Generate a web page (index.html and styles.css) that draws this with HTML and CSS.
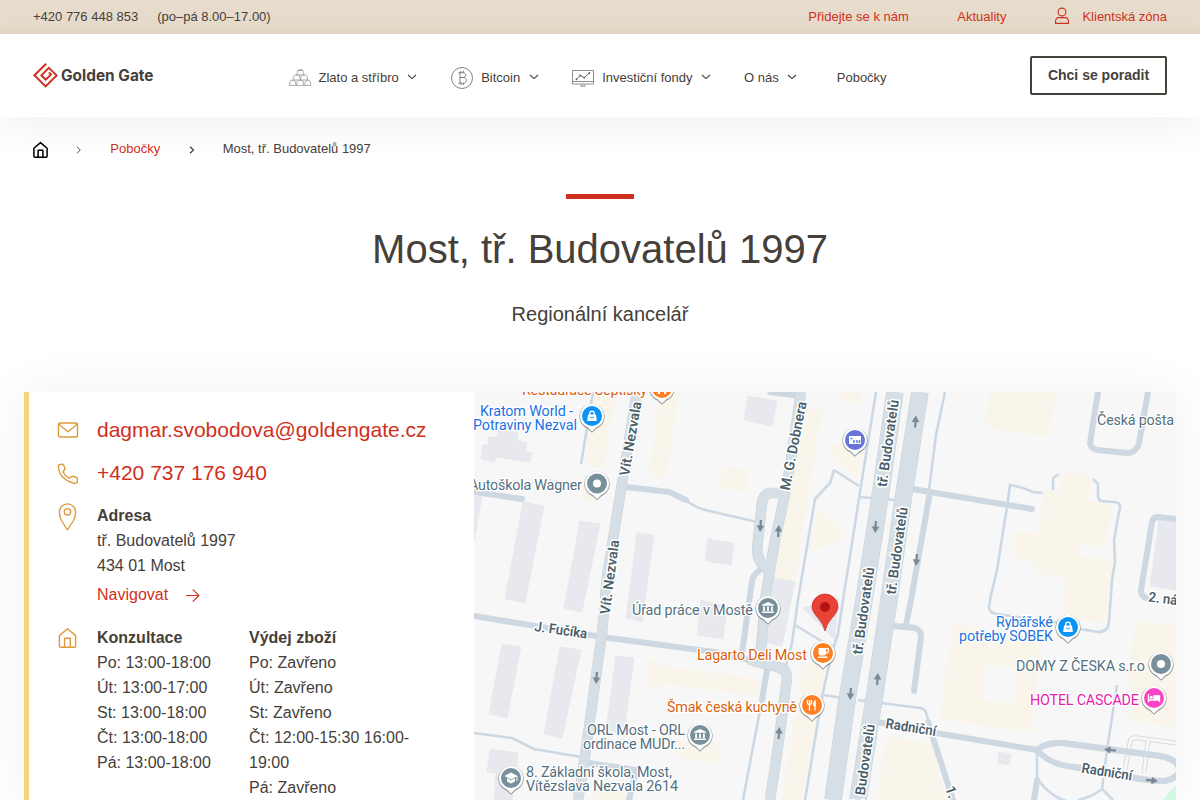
FILE: index.html
```html
<!DOCTYPE html>
<html lang="cs">
<head>
<meta charset="utf-8">
<title>Most, tř. Budovatelů 1997 | Golden Gate</title>
<link rel="stylesheet" href="styles.css">
</head>
<body>
<div class="topbar">
  <div class="topbar-contact"><span class="t-phone">+420 776 448 853</span><span>(po–pá 8.00–17.00)</span></div>
  <nav class="topbar-links">
    <a>Přidejte se k nám</a><a>Aktuality</a>
    <a class="client"><svg width="16" height="18" viewBox="0 0 16 18"><g fill="none" stroke="#cf3020" stroke-width="1.1"><circle cx="8" cy="5" r="3.9"/><path d="M3.8 10.6H12.2C14 11 14.6 13 14.5 16.4H1.5C1.4 13 2 11 3.8 10.6Z" stroke-linejoin="round"/></g></svg><span>Klientská zóna</span></a>
  </nav>
</div>
<header class="header">
  <svg class="logo" width="122" height="28" viewBox="0 0 122 28"><path d="M13.2 1.7L1.4 13.2L12.6 24.4L23.6 13.4L15.800 5.800L8.4 13.4L12.7 17.700L18 12.500L15.900 10.400" fill="none" stroke="#cf3020" stroke-width="2"/><text x="28" y="19" textLength="92.5" lengthAdjust="spacingAndGlyphs" class="logo-text">Golden Gate</text></svg>
  <nav class="menu">
    <a class="m-gold"><svg width="24" height="22" viewBox="0 0 24 22"><g fill="#fff" stroke="#9c9894" stroke-width=".8" stroke-linejoin="round"><path d="M8.8 8L9.7 3.5L11 2.7H14L15 3.5L16 8ZM9.7 3.5H15M5 13L6 8.6L7 8H10.4L11.4 8.6L12.4 13ZM12.4 13L13.4 8.6L14.4 8H17.8L18.8 8.6L19.8 13ZM1.2 18.4L2.2 14L3.2 13.4H6L7 14L8.2 18.4ZM8.4 18.4L9.4 14L10.4 13.4H14L15 14L16 18.4ZM16.4 18.4L17.6 14L18.5 13.4H21L22 14L23 18.4Z"/></g></svg><span>Zlato a stříbro</span><svg class="chev" width="10" height="6" viewBox="0 0 10 6"><path d="M1 1L5 4.6L9 1"/></svg></a>
    <a class="m-bit"><svg width="24" height="24" viewBox="0 0 24 24"><g fill="none" stroke="#77736e" stroke-width=".9"><circle cx="12" cy="12" r="10.5"/><path d="M8.3 6.7H13C16.4 6.7 16.4 11.5 13 11.5H10H13.4C17.3 11.5 17.3 17.2 13.4 17.2H8.3M10 6.7V17.2M11 4.8V6.7M13.4 4.8V6.7M11 17.2V19.2M13.4 17.2V19.2"/></g></svg><span>Bitcoin</span><svg class="chev" width="10" height="6" viewBox="0 0 10 6"><path d="M1 1L5 4.6L9 1"/></svg></a>
    <a class="m-fund"><svg width="24" height="20" viewBox="0 0 24 20"><g fill="none" stroke="#85817c" stroke-width=".9"><path d="M1.5 2.5H22.5V16H1.5ZM1.5 13.5H22.5"/><path d="M5.5 11.3L9.3 7.5L13.3 9.7L18.3 5" stroke="#55514c"/><path d="M10.8 16L10.5 18.2H13.5L13.2 16M9 18.2H15" stroke-width=".6"/></g><g fill="#55514c"><circle cx="5.5" cy="11.3" r=".9"/><circle cx="9.3" cy="7.5" r=".9"/><circle cx="13.3" cy="9.7" r=".9"/><circle cx="18.3" cy="5" r=".9"/></g></svg><span>Investiční fondy</span><svg class="chev" width="10" height="6" viewBox="0 0 10 6"><path d="M1 1L5 4.6L9 1"/></svg></a>
    <a class="m-about"><span>O nás</span><svg class="chev" width="10" height="6" viewBox="0 0 10 6"><path d="M1 1L5 4.6L9 1"/></svg></a>
    <a class="m-branch"><span>Pobočky</span></a>
  </nav>
  <a class="button">Chci se poradit</a>
</header>
<nav class="crumbs">
  <svg width="17" height="18" viewBox="0 0 17 18"><path d="M1.9 7.2L8.5 1.6L15.1 7.2V15.2Q15.1 16.2 14.1 16.2H2.9Q1.9 16.2 1.9 15.2ZM6.1 16V9.3H10.9V16" fill="none" stroke="#000" stroke-width="1.5" stroke-linejoin="round"/></svg>
  <svg class="sep1" width="6" height="8" viewBox="0 0 6 8"><path d="M1 .8L4.3 4L1 7.2" fill="none" stroke="#555" stroke-width="1"/></svg>
  <a>Pobočky</a>
  <svg class="sep2" width="6" height="8" viewBox="0 0 6 8"><path d="M1 .8L4.5 4L1 7.2" fill="none" stroke="#444" stroke-width="1.3"/></svg>
  <span>Most, tř. Budovatelů 1997</span>
</nav>
<main>
  <div class="intro"><div class="bar"></div><h1>Most, tř. Budovatelů 1997</h1><p>Regionální kancelář</p></div>
  <section class="card">
    <div class="info">
      <div class="row mail"><svg width="22" height="22" viewBox="0 0 22 22"><g class="gold"><rect x="1.5" y="4" width="19" height="14" rx="1.8"/><path d="M1.8 5.3L11 12.8L20.2 5.3"/></g></svg><a class="big">dagmar.svobodova@goldengate.cz</a></div>
      <div class="row tel"><svg width="22" height="22" viewBox="0 0 22 22"><path class="gold" d="M1.5 2.2Q4 .7 6.2 1.5Q7.6 3.8 8 6L5.9 8.8Q8 13.2 12.5 15.3L15 13.2Q18.3 13.3 20.3 15V19.4Q19.4 20.7 15.8 20Q9.7 18.2 5.3 13.7Q1.1 8.4 1.5 2.2Z"/></svg><a class="big">+420 737 176 940</a></div>
      <div class="row addr"><svg width="22" height="30" viewBox="0 0 22 30"><g class="gold"><path d="M10.5 28L4.5 18.5Q2.4 14.5 2.4 10A8 8 0 0 1 18.6 10Q18.6 14.5 16.5 18.5Z"/><circle cx="10.5" cy="9.8" r="3.2"/></g></svg><div class="lines"><strong>Adresa</strong><span>tř. Budovatelů 1997</span><span>434 01 Most</span><a>Navigovat<svg width="14" height="14" viewBox="0 0 14 14"><path d="M0 7.5H13M6.7 1.300L13 7.5L6.7 13.700" fill="none" stroke="#cf3020" stroke-width="1.1"/></svg></a></div></div>
      <div class="row hours"><svg width="22" height="22" viewBox="0 0 22 22"><path class="gold" d="M2.4 8.6L10.5 1.8L18.6 8.6V18.9Q18.6 20.2 17.3 20.2H3.7Q2.4 20.2 2.4 18.9ZM7.6 20V11.2H13.3V20"/></svg>
        <div class="lines"><strong>Konzultace</strong><span>Po: 13:00-18:00</span><span>Út: 13:00-17:00</span><span>St: 13:00-18:00</span><span>Čt: 13:00-18:00</span><span>Pá: 13:00-18:00</span></div>
        <div class="lines second"><strong>Výdej zboží</strong><span>Po: Zavřeno</span><span>Út: Zavřeno</span><span>St: Zavřeno</span><span>Čt: 12:00-15:30 16:00-19:00</span><span>Pá: Zavřeno</span></div></div>
    </div>
    <svg class="map" width="702" height="408" viewBox="474 392 702 408">
      <defs>
        <g id="pin"><path d="M0 16L-4.8 11.8A12.7 12.7 0 1 1 4.8 11.8Z" fill="#566269" opacity=".3" transform="translate(0 .6)"/><path d="M0 16L-4.500 11.700A12.500 12.500 0 1 1 4.500 11.700Z" fill="#59666d" opacity=".45" transform="translate(0 .8)"/><path d="M0 15.5L-4.3 11.3A12 12 0 1 1 4.3 11.3Z" fill="#fff"/></g>
        <g id="arrow"><path d="M0 6V-1" stroke="#788994" stroke-width="2.2"/><path d="M-3.8 .4L0 -6L3.8 .4Z" fill="#788994"/></g>
        <g id="bank" fill="#fff"><path d="M-6 -2.3V-3.3L0 -6L6 -3.3V-2.3ZM-4.8 -1.5H-3V3H-4.8ZM-.9 -1.5H.9V3H-.9ZM3 -1.5H4.8V3H3ZM-6 3.5H6V5H-6Z"/></g>
        <g id="bag"><path d="M-4 -1.5H4L4.8 5H-4.8Z" fill="#fff"/><path d="M-2.2 -1V-2.7A2.2 2.2 0 0 1 2.2 -2.7V-1" fill="none" stroke="#fff" stroke-width="1.3"/><path d="M-1.8 .8Q0 3.5 1.8 .8" fill="none" stroke="#0a93f5"/></g>
      </defs>
      <rect x="474" y="392" width="702" height="408" fill="#f7f7f7"/>
      <g class="shop">
        <path d="M594 392L616 392L603 468L584 466ZM660 392H679L666 479L649 475ZM584 479L604 480L598 502L580 499ZM723 466L749 470L746 492L719 488ZM806 407L822 410L795 582L774 578ZM840 392H861L859 403L839 400ZM825 448L847 440L863 452L857 477ZM817 508L848 536L809 552ZM803 663L826 665L802 800H782ZM886 737L932 743L945 800H877ZM649 659L662 661V666L759 679L757 696L662 683V688L646 686ZM677 740L721 743L717 764L674 756ZM596 788L626 792L625 800H593ZM990 392H1056L1049 437L985 427ZM1135 621L1176 625L1174 727L1130 720L1132 683L1128 682Z"/>
        <path d="M1059 475L1075 472L1094 478L1087 500L1112 503L1105 547L1080 543L1078 555L1114 561L1106 622L1063 617L1067 578L1035 573L1036 562L1013 558L1015 532L1039 533L1044 490L1061 493Z"/>
        <path fill-rule="evenodd" d="M953 624L1042 638L1031 732L939 719ZM985 664L1018 668L1013 704L981 699Z"/>
      </g>
      <path class="house" d="M481 459L483 445L488 445L489 437L496 437L499 430L517 432L518 441L527 443L526 451L532 453L530 462L496 457L494 462ZM474 496L482 497L474 541ZM523 502L544 506L525 603L505 599ZM580 521L600 524L582 612L564 608ZM637 533L654 535L642 622L626 618ZM708 539L734 543L731 565L705 561ZM748 396L777 401L772 426L744 420ZM774 578L795 582L782 646L763 642ZM803 608L838 598L835 640ZM701 600L727 607L723 639L697 635ZM502 644L521 647L507 718L489 714ZM560 647L581 650L562 738L544 734ZM616 656L634 658L624 733L606 730ZM490 749L518 753L516 775L512 800H494L496 773L487 772ZM1159 520L1176 522V590L1150 586ZM999 752L1011 754L1009 765L998 763ZM549 479L560 481L558 488H548Z"/>
      <path d="M1163 800L1176 785V800Z" fill="#d3f8e2"/>
      <g class="path">
        <path d="M593 392L581 464M686 500Q696 509 714 512L757 522M876 392L864 467L843 600L838 634L832 652L822 697L805 800M859 486L834 470L830 483L815 499L798 600L792 643L786 665M795 625L823 642M860 497L895 500M945 392L936 435L929 490M823 695L843 698M858 700L920 708Q926 709 927 716L930 727M767 670L761 705L743 800M474 733L512 738L534 749L581 757"/>
        <path d="M1043 493L1033 492Q1022 487 1010 485L1007 507L997 570L991 595L989 607Q989 613 997 614L1060 623M1080 629L1098 632Q1108 632 1109 622L1112 580L1115 562L1114 540L1120 507Q1120 502 1114 502L1102 501Q1098 500 1098 496V484L1093 479M1053 490V480Q1054 475 1059 475M1117 685L1107 750L1102 789M1037 752V780M1038 780Q1053 799 1070 802M1078 800Q1092 797 1102 789L1113 800"/>
      </g>
      <g class="lane">
        <path d="M474 492L522 499M626 487L669 492L686 500M474 616L602 637L714 652L753 661M770 392L800 396M760 570Q753 575 752 581L742 653M767 670L762 700M930 492L911 600L906 625M913 489L930 492L1032 509M895 626L915 628Q921 630 921 637L914 691M877 722L930 732L1037 750M928 722L953 800M589 763L636 770L629 800M1098 392L1090 443Q1090 448 1097 450L1127 453Q1136 453 1139 443L1148 392M1176 519L1158 517Q1153 517 1152 522L1141 590Q1141 596 1146 598"/>
        <path d="M1037 750Q1045 742 1063 743L1160 756Q1174 759 1178 765Q1183 777 1165 781Q1150 781 1130 777L1074 767Q1050 765 1037 750M1037 780L1034 800"/>
      </g>
      <path d="M1125 770L1130 742Q1131 737 1138 738L1176 743M1148 740L1144 773" fill="none" stroke="#d5dde3" stroke-width="5"/><path d="M1125 770L1130 742Q1131 737 1138 738L1176 743M1148 740L1144 773" fill="none" stroke="#f7f7f7" stroke-width="3"/>
      <path class="lane" d="M1037 750Q1045 742 1063 743L1160 756Q1174 759 1178 765Q1183 777 1165 781Q1150 781 1130 777L1074 767"/>
      <g class="road edge">
        <path class="w10" d="M637 392L623 477L607 577L602 633L584 763L578 800M801 392L787 485L775 540L769 575L765 600L761 650M784 493H772Q764 493 762 502L757 550Q758 563 768 570M753 661L777 667Q787 669 787 678L778 747L770 800"/>
        <path class="w18" d="M895 392L880 497L864 600L847 700L833 800M920 392L903 500L889 600L875 693L858 800"/>
      </g>
      <g class="road">
        <path class="w10" d="M637 392L623 477L607 577L602 633L584 763L578 800M801 392L787 485L775 540L769 575L765 600L761 659M784 493H772Q764 493 762 502L757 550Q758 563 768 570M748 660L777 667Q787 669 787 678L778 747L770 800"/>
        <path class="w18" d="M895 392L880 497L864 600L847 700L833 800M920 392L903 500L889 600L875 693L858 800"/>
      </g>
      <use href="#arrow" transform="translate(915.500 421.500) rotate(4)"/><use href="#arrow" transform="translate(875.500 527) rotate(184)"/><use href="#arrow" transform="translate(916.500 560) rotate(184)"/><use href="#arrow" transform="translate(760.500 526) rotate(184)"/><use href="#arrow" transform="translate(778.500 531) rotate(4)"/><use href="#arrow" transform="translate(596.500 678) rotate(184)"/><use href="#arrow" transform="translate(850.500 694) rotate(184)"/><use href="#arrow" transform="translate(877.500 679) rotate(4)"/><use href="#arrow" transform="translate(779 733) rotate(4)"/><use href="#arrow" transform="translate(1110 750) rotate(-84)"/><use href="#arrow" transform="translate(1152 780.500) rotate(96)"/>
      <g class="street">
        <text transform="translate(629 476.500) rotate(-80.500)" textLength="75" lengthAdjust="spacingAndGlyphs">Vít. Nezvala</text>
        <text transform="translate(609.500 615) rotate(-82.500)" textLength="75" lengthAdjust="spacingAndGlyphs">Vít. Nezvala</text>
        <text transform="translate(789.500 491) rotate(-79)" textLength="90" lengthAdjust="spacingAndGlyphs">M. G. Dobnera</text>
        <text transform="translate(886.500 487.500) rotate(-82)" textLength="88" lengthAdjust="spacingAndGlyphs">tř. Budovatelů</text>
        <text transform="translate(895.500 595) rotate(-82)" textLength="88" lengthAdjust="spacingAndGlyphs">tř. Budovatelů</text>
        <text transform="translate(862 655) rotate(-82)" textLength="88" lengthAdjust="spacingAndGlyphs">tř. Budovatelů</text>
        <text transform="translate(862.500 812) rotate(-82)" textLength="88" lengthAdjust="spacingAndGlyphs">tř. Budovatelů</text>
        <text transform="translate(534 631) rotate(8)" textLength="53" lengthAdjust="spacingAndGlyphs">J. Fučíka</text>
        <text transform="translate(885 728) rotate(9)" textLength="51" lengthAdjust="spacingAndGlyphs">Radniční</text>
        <text transform="translate(1081 772.500) rotate(9)" textLength="51" lengthAdjust="spacingAndGlyphs">Radniční</text>
        <text transform="translate(1148 601.500) rotate(7)" textLength="29" lengthAdjust="spacingAndGlyphs">2. ná</text>
        <text transform="translate(945 788) rotate(70)">1.</text>
      </g>
      <g class="poi food"><text x="522" y="395" textLength="125">Restaurace Septisky</text><text x="697" y="660" textLength="110">Lagarto Deli Most</text><text x="667" y="712" textLength="130">Šmak česká kuchyně</text></g>
      <g class="poi blue"><text x="480" y="416" textLength="93">Kratom World -</text><text x="473" y="430" textLength="104">Potraviny Nezval</text><text x="996" y="627" textLength="57">Rybářské</text><text x="959" y="641" textLength="94">potřeby SOBEK</text></g>
      <g class="poi slate"><text x="469" y="490" textLength="113">Autoškola Wagner</text><text x="1097" y="425" textLength="77">Česká pošta</text><text x="632" y="615" textLength="121">Úřad práce v Mostě</text><text x="587" y="735" textLength="98">ORL Most - ORL</text><text x="583" y="749" textLength="102">ordinace MUDr...</text><text x="526" y="777" textLength="146">8. Základní škola, Most,</text><text x="526" y="791" textLength="152">Vítězslava Nezvala 2614</text><text x="1016" y="671" textLength="129">DOMY Z ČESKA s.r.o</text></g>
      <g class="poi pink"><text x="1030" y="705" textLength="109">HOTEL CASCADE</text></g>
      <g transform="translate(662 388)"><use href="#pin"/><circle r="10" fill="#ff7f22"/><path d="M-3 -4V6M3 -4V6" stroke="#fff" stroke-width="2"/></g>
      <g transform="translate(592 416)"><use href="#pin"/><circle r="10" fill="#0a93f5"/><use href="#bag"/></g>
      <g transform="translate(597 483.500)"><use href="#pin"/><circle r="10" fill="#78909c"/><circle r="4" fill="#fff"/></g>
      <g transform="translate(855 440)"><use href="#pin"/><circle r="10" fill="#6675d6"/><path d="M-6 -4H6V4H-6Z" fill="#fff"/><path d="M-4.500 -1.500H-2.500M-1 0V3M2 0V3M4.500 0V3" stroke="#4d86e5" stroke-width="1.5"/></g>
      <g transform="translate(768 608)"><use href="#pin"/><circle r="10" fill="#78909c"/><use href="#bank"/></g>
      <g transform="translate(700 735)"><use href="#pin"/><circle r="10" fill="#78909c"/><use href="#bank"/></g>
      <g transform="translate(511 778)"><use href="#pin"/><circle r="10" fill="#78909c"/><path d="M0 -5.500L6.500 -2L0 1.500L-6.500 -2ZM-4 0V3.500L0 5.500L4 3.500V0L0 2.500ZM5.500 -2H6.500V3H5.500Z" fill="#fff"/></g>
      <g transform="translate(823 653)"><use href="#pin"/><circle r="10" fill="#ff7f22"/><path d="M-4.500 -5H6V-1.500Q6 .5 3 .5Q3 2.500 1 2.500H-2.500Q-4.500 2.500 -4.500 .5ZM3 -3.700V-.7Q4.800 -.7 4.800 -2V-3.700ZM-5 3.600H4.500V5H-5Z" fill="#fff"/></g>
      <g transform="translate(812 705)"><use href="#pin"/><circle r="10" fill="#ff7f22"/><path d="M-2.500 -5V5.500M-4.500 -5V-1.500Q-2.500 1 -.5 -1.500V-5M3 -4.500V5.500" fill="none" stroke="#fff" stroke-width="1.3"/><path d="M3.600 -5Q1 -4 1 1H3.600Z" fill="#fff"/></g>
      <g transform="translate(1068 627)"><use href="#pin"/><circle r="10" fill="#0a93f5"/><use href="#bag"/></g>
      <g transform="translate(1161 664)"><use href="#pin"/><circle r="10" fill="#78909c"/><circle r="4" fill="#fff"/></g>
      <g transform="translate(1154 698)"><use href="#pin"/><circle r="10" fill="#fa44c5"/><path d="M-5.500 -4V4M-5.500 2H5.500V4M5.500 2V-2H0V1.500" fill="none" stroke="#fff" stroke-width="1.3"/><path d="M0 -2.500H5.500V2H0Z" fill="#fff"/><circle cx="-2.700" cy="-.8" r="1.500" fill="#fff"/></g>
      <path d="M825 631Q823.500 624 818 618Q812 611 812 607A13 13 0 0 1 838 607Q838 611 832 618Q826.500 624 825 631Z" fill="#ea4335" stroke="#c5221f" stroke-width=".7"/><circle cx="825" cy="607" r="5" fill="#b31412"/>
    </svg>
  </section>
</main>
</body>
</html>
```

FILE: styles.css
```css
* { box-sizing: border-box; }
html, body { height: 800px; overflow: hidden; }
body { margin: 0; background: #fff; color: #45403a; font-family: "Liberation Sans", Arial, sans-serif; font-size: 13px; }
svg { flex: none; display: block; }
a { color: #cf3020; }
.topbar { height: 34px; padding: 0 33px 2px; display: flex; align-items: center; justify-content: space-between; background: linear-gradient(#e7dccb 70%, #e3d8c6); }
.topbar-contact { display: flex; gap: 19px; }
.topbar-links { display: flex; align-items: center; gap: 48.5px; }
.client { display: flex; align-items: center; gap: 12px; }
.topbar-links a:nth-child(2) { margin-right: -.5px; }
.header { height: 83px; padding: 0 33px; display: flex; background: #fff; box-shadow: 0 10px 40px rgba(0, 0, 0, .055); }
.logo { margin-top: 28px; }
.logo-text { font: 700 15.5px Inter, sans-serif; fill: #45403a; }
.menu { display: flex; height: 24px; margin: 31px 0 0 133px; align-items: center; }
.menu a { display: flex; align-items: center; color: #45403a; white-space: nowrap; }
.menu a > svg:first-child:not(.chev) { margin-right: 7px; }
.menu .m-gold > svg:first-child { margin-top: 2px; margin-left: -.5px; margin-right: 7.5px; }
.menu .m-bit > svg:first-child, .menu .m-fund > svg:first-child { margin-top: 1px; }
.menu .chev { margin-left: 8.5px; fill: none; stroke: #45403a; stroke-width: 1.1; }
.m-bit { margin-left: 33px; }
.m-fund { margin-left: 32.5px; }
.m-about { margin-left: 33px; }
.m-branch { margin-left: 39.5px; }
.button { margin: 22px 0 0 auto; width: 137px; height: 39px; border: 2px solid #45403a; border-radius: 2px; color: #45403a; font-size: 14px; font-weight: 700; line-height: 35px; text-align: center; }
.crumbs { height: 77px; padding: 24px 32px 0; display: flex; align-items: flex-start; line-height: 15px; }
.crumbs svg { flex: none; }
.crumbs .sep1 { margin: 5px 28px 0 27.3px; }
.crumbs .sep2 { margin: 5px 28px 0 28.5px; }
.intro { height: 198px; text-align: center; }
.bar { width: 68px; height: 5px; margin: 0 auto; background: #cf3020; }
h1 { margin: 25px 0 0; font-size: 40px; line-height: 50px; font-weight: 400; }
.intro p { margin: 27px 0 0; font-size: 20px; line-height: 26px; }
.card { margin: 0 24px; height: 408px; display: flex; background: #fff; border-left: 5px solid #f7d37f; box-shadow: 0 0 50px rgba(0, 0, 0, .06); }
.info { width: 445px; padding: 25px 28px 0; font-size: 16px; line-height: 25px; }
.row { display: flex; }
.row > svg { width: 22px; margin-right: 18px; }
.row > svg:first-child { overflow: visible; }
.big { font-size: 21px; line-height: 26px; white-space: nowrap; }
.mail > svg { margin-top: 2px; }
.tel { margin-top: 17px; }
.tel > svg { margin-top: 3px; }
.addr { margin-top: 17px; }
.addr > svg { margin-top: -1px; }
.hours { margin-top: 18px; }
.hours > svg { margin-top: 2px; }
.lines { display: flex; flex-direction: column; width: 152px; }
.lines.second { width: 165px; }
.lines a { display: flex; align-items: center; gap: 18px; margin-top: 4px; }
.gold { fill: none; stroke: #dc9a3e; stroke-width: 1.4; stroke-linejoin: round; }
.map { width: 702px; height: 408px; overflow: hidden; }
.shop { fill: #f9f5ea; }
.house { fill: #e8e9ee; stroke: #e0e2e7; stroke-width: .5; }
.path { fill: none; stroke: #ccd8e4; stroke-width: 2.6; stroke-linejoin: round; }
.lane { fill: none; stroke: #cdd8e2; stroke-width: 6; stroke-linecap: round; stroke-linejoin: round; }
.road { fill: none; stroke: #d6dfe6; stroke-linejoin: round; }
.w10 { stroke-width: 9.5; }
.w18 { stroke-width: 16.5; }
.edge { stroke: #c7d1d9; }
.edge .w10 { stroke-width: 10.5; }
.edge .w18 { stroke-width: 17.5; }
.street { font: 600 14px Roboto, sans-serif; fill: #4a5f6b; stroke: #fff; stroke-width: 3px; paint-order: stroke; stroke-linejoin: round; }
.poi { font: 400 14.4px Roboto, sans-serif; stroke: #fff; stroke-width: 2.5px; paint-order: stroke; stroke-linejoin: round; }
.food { fill: #d95f0b; }
.blue { fill: #1b72e0; }
.slate { fill: #557080; }
.pink { fill: #e51cac; }
```
